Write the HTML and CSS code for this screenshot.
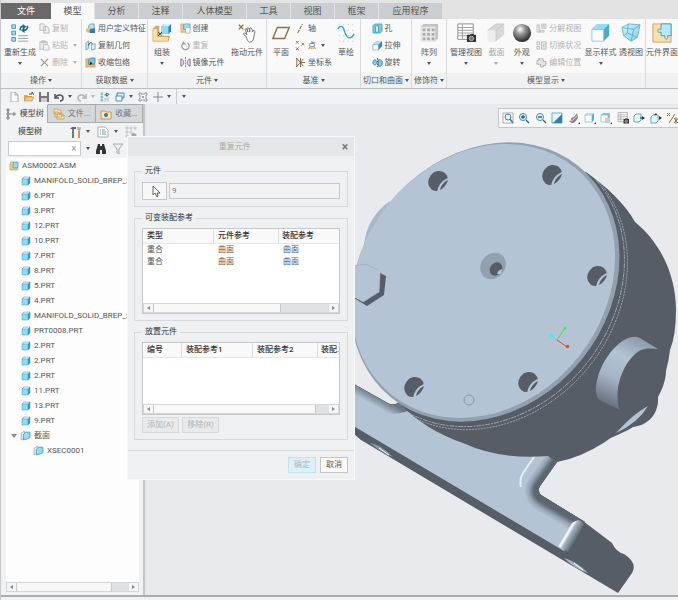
FILE: index.html
```html
<!DOCTYPE html>
<html lang="zh-CN">
<head>
  <meta charset="UTF-8">
  <title>ASM0002</title>
  <link rel="stylesheet" href="styles.css">
</head>
<body>
  <!-- iconos -->
  <svg class="sprite" aria-hidden="true">
    <defs>
      <linearGradient id="blue" x1="0" y1="0" x2="1" y2="1"><stop offset="0" stop-color="#d4f2fc"/><stop offset="1" stop-color="#7fcfee"/></linearGradient>
      <radialGradient id="ball" cx=".4" cy=".3" r=".65"><stop offset="0" stop-color="#fff"/><stop offset=".4" stop-color="#999"/><stop offset="1" stop-color="#333"/></radialGradient>
    </defs>
    <symbol id="cube" viewBox="0 0 10 10"><path d="M1 3l2-2h6v6L7 9H1z" fill="#2f9bc4"/><path d="M1 3l2-2h6L7 3z" fill="#d9f4fd"/><path d="M1 3h6v6H1z" fill="#8fdaf4"/><path d="M1 3l2-2h6v6L7 9H1zM1 3h6v6M7 3l2-2" fill="none" stroke="#4396b8" stroke-width=".5"/></symbol>
    <symbol id="asm" viewBox="0 0 10 10"><path d="M1 2l1-1h3v5h4v2L8 9H1z" fill="#f0cf8c" stroke="#b08a48" stroke-width=".6"/><path d="M4 2l1-1h4v5L8 7H4z" fill="#8fdaf4" stroke="#3688ab" stroke-width=".6"/></symbol>
    <symbol id="section" viewBox="0 0 10 10"><path d="M1 3l3-2v6L1 9z" fill="#f4f4f4" stroke="#999" stroke-width=".6"/><path d="M3 4l2-2h4v5L7 8 3 9z" fill="#92dcf4" stroke="#3f8fb0" stroke-width=".7"/></symbol>
    <symbol id="regen" viewBox="0 0 22 22"><g fill="#a6e0f5" stroke="#4294b5"><path d="M2 2h4v4H2zM2 9h4v4H2zM2 16h4v4H2z"/></g><path d="M9 14h11M9 17h11M9 20h11" stroke="#999"/><path d="M11 8c0-3 2-5 4-4M19 3c1 3-1 5-4 5" fill="none" stroke="#17678d" stroke-width="1.800"/><path d="M14 1l4 3-4 3zM16 5v6l-4-3z" fill="#17678d"/></symbol>
    <symbol id="copy" viewBox="0 0 12 12"><path d="M1 1h4l2 2v5H1zM5 4h4l2 2v5H5z" fill="#eee" stroke="#bbb"/></symbol>
    <symbol id="paste" viewBox="0 0 12 12"><path d="M1 2h8v8H1zM3 1h4v2H3z" fill="#eee" stroke="#bbb"/><path d="M5 5h4l2 2v4H5z" fill="#f5f5f5" stroke="#bbb"/></symbol>
    <symbol id="del" viewBox="0 0 12 12"><path d="M2 2l8 8M10 2l-8 8" stroke="#999" stroke-width="1.4"/></symbol>
    <symbol id="udf" viewBox="0 0 12 12"><path d="M4 3l2-2h4v6H4z" fill="#b9e4f4" stroke="#477f98" stroke-width=".7"/><circle cx="3.500" cy="8" r="2.500" fill="#e8bd70"/><path d="M5 11V8l2-2h4v5z" fill="#347da4"/></symbol>
    <symbol id="copygeo" viewBox="0 0 12 12"><path d="M1 11V3l3-2v8z" fill="#bfeafa" stroke="#4a8da8" stroke-width=".7"/><path d="M7 11V5l4-1v6z" fill="#d8f1fa" stroke="#4a8da8" stroke-width=".7"/><path d="M4 6c0-3 3-4 4-2" fill="none" stroke="#222"/></symbol>
    <symbol id="shrink" viewBox="0 0 12 12"><path d="M1 2h4v6h6v3H1z" fill="#e9bf74" stroke="#b28b4b" stroke-width=".6"/><path d="M4 3l2-2h5v6L9 8H4z" fill="#76c4e2" stroke="#2c7898" stroke-width=".7"/><path d="M5 9l1-4 2 2z" fill="#123"/></symbol>
    <symbol id="assemble" viewBox="0 0 22 22"><path d="M1 6l3-3h4v11h12l-2 6H1z" fill="#d5aa63"/><path d="M1 6h5v9h12v5H1z" fill="#fae2aa" stroke="#c49b58" stroke-width=".6"/><path d="M10 4l3-3h8v8l-3 3h-8z" fill="#2789ad"/><path d="M10 4l3-3h8l-3 3z" fill="#c9f1fd"/><path d="M10 4h8v8h-8z" fill="#8ddbf7"/><path d="M7 10l4 4M11 10l-4 4" stroke="#222"/></symbol>
    <symbol id="create" viewBox="0 0 12 12"><path d="M1 1h3v6h5v3H1z" fill="#f2d08c" stroke="#b08a48" stroke-width=".6"/><path d="M4 2l1-1h6v6H4z" fill="#9adcf3" stroke="#3f8fb0" stroke-width=".7"/><path d="M7 5h4v6H6V6z" fill="#fff" stroke="#888" stroke-width=".6"/></symbol>
    <symbol id="repeat" viewBox="0 0 12 12"><path d="M4 3a4 4 0 1 0 4 0" fill="none" stroke="#999" stroke-width="1.300"/><path d="M3 1v4h4z" fill="#999"/></symbol>
    <symbol id="mirror" viewBox="0 0 12 12"><path d="M1 2c4 1 4 7 0 8zM11 2c-4 1-4 7 0 8z" fill="#e9dcf4" stroke="#8261a5"/><path d="M6 0v12" stroke="#777" stroke-dasharray="2 1"/></symbol>
    <symbol id="drag" viewBox="0 0 22 22"><path d="M2 2l5 5M7 2L2 7" stroke="#94723a" stroke-width="1.500"/><path d="M10 15l-3-3c1-2 3 0 4 1L9 7c1-2 2 0 3 3l-1-4c1-2 3 0 3 4V6c1-2 3 0 3 4l1-2c2 0 2 2 1 5-1 5-1 8-5 8-2 0-3-3-4-6z" fill="#fff" stroke="#666"/></symbol>
    <symbol id="plane" viewBox="0 0 22 22"><path d="M7 5h13l-5 12H2z" fill="none" stroke="#94723a" stroke-width="1.600"/></symbol>
    <symbol id="axis" viewBox="0 0 12 12"><path d="M3 11L8 1" stroke="#94723a" stroke-width="1.200" stroke-dasharray="4 1"/></symbol>
    <symbol id="points" viewBox="0 0 12 12"><path d="M1 1l3 3M4 1L1 4M7 3l3 3M10 3L7 6M1 8l3 3M4 8l-3 3" stroke="#94723a"/></symbol>
    <symbol id="csys" viewBox="0 0 12 12"><path d="M1 1l5 5 3-4M1 11l5-5 3 4M2 1v10M6 1v10M6 6h5" fill="none" stroke="#79603a"/></symbol>
    <symbol id="sketch" viewBox="0 0 22 22"><path d="M3 2h18M3 8h18M3 14h18M3 20h18" stroke="#aaa" stroke-dasharray="1 4"/><path d="M2 7c2-5 6-4 7 1 2 7 4 9 7 8 2 0 3-2 4-4" fill="none" stroke="#2ea8d8" stroke-width="1.500"/></symbol>
    <symbol id="hole" viewBox="0 0 12 12"><path d="M1 3l2-2h8v8l-2 2H1z" fill="#7bc8e4" stroke="#3f8fb0" stroke-width=".7"/><path d="M4 3h3v7H4z" fill="#e9f9fe" stroke="#27789a" stroke-width=".7"/></symbol>
    <symbol id="extrude" viewBox="0 0 12 12"><path d="M1 5l4-4h6v6l-4 4H1z" fill="#358eb5"/><path d="M1 5h6v6H1z" fill="#fff" stroke="#77a6b8" stroke-width=".7"/><path d="M1 5l4-4h6L7 5z" fill="#ade4f7"/></symbol>
    <symbol id="revolve" viewBox="0 0 12 12"><path d="M1 6c0-4 4-4 4 0s-4 3-4 0zM7 3h2c3 1 3 6 0 7H7z" fill="#85cce6" stroke="#348dac"/><path d="M6 1v10" stroke="#555" stroke-dasharray="2 1"/></symbol>
    <symbol id="pattern" viewBox="0 0 22 22"><path d="M2 4l3-3h16v16l-3 3H2z" fill="#c4c4c4"/><path d="M2 4h16v16H2z" fill="#e7e7e7"/><g fill="#aaa"><path d="M4 6h3v3H4zM9 6h3v3H9zM14 6h3v3h-3zM4 11h3v3H4zM9 11h3v3H9zM14 11h3v3h-3zM4 16h3v3H4zM9 16h3v3H9zM14 16h3v3h-3z"/></g></symbol>
    <symbol id="camera" viewBox="0 0 22 22"><path d="M2 1h17v17H2z" fill="#fff" stroke="#888"/><path d="M2 5h17M2 8h17M2 11h17M2 14h17M7 1v17" stroke="#999"/><path d="M12 13h3l1-1h3l1 1h2v8H12z" fill="#333"/><circle cx="17" cy="17" r="2.500" fill="#777" stroke="#ddd" stroke-width=".7"/></symbol>
    <symbol id="cut" viewBox="0 0 22 22"><path d="M2 8l9-7h9v12l-9 7H2z" fill="#d8d8d8"/><path d="M2 8h9v12H2z" fill="#eee"/><path d="M2 8l9-7h9l-9 7v12" fill="none" stroke="#bbb" stroke-width=".7"/></symbol>
    <symbol id="sphere" viewBox="0 0 22 22"><circle cx="11" cy="11" r="10" fill="url(#ball)"/></symbol>
    <symbol id="explode" viewBox="0 0 12 12"><path d="M1 2h3v8H1zM6 1h2v5H6zM9 1h2v5H9zM4 8h5v2H4z" fill="#ddd" stroke="#bbb" stroke-width=".7"/></symbol>
    <symbol id="toggle" viewBox="0 0 12 12"><path d="M1 2h3v3H1zM1 7h3v3H1zM6 2h5v8H6z" fill="#eee" stroke="#bbb"/><path d="M8 4v4M10 4v4" stroke="#bbb"/></symbol>
    <symbol id="editpos" viewBox="0 0 12 12"><path d="M3 2h5v3h3v4H8v2H5V8H1V4h2z" fill="#e4e4e4" stroke="#999" stroke-dasharray="2 1"/></symbol>
    <symbol id="style" viewBox="0 0 22 22"><path d="M1 7l6-6h13v13l-6 6z" fill="#4fa9c6"/><path d="M1 7l6-6h13l-6 6z" fill="#91dff8"/><path d="M1 7h13v13H1z" fill="#fff" stroke="#83c6df"/></symbol>
    <symbol id="persp" viewBox="0 0 22 22"><path d="M1 5l7-4 13 1-3 14-7 4-8-6z" fill="url(#blue)" stroke="#6db3cd"/><path d="M1 5l13 2 7-5M14 7l-3 13M8 1L7 11l11 5M7 11l-4 3" fill="none" stroke="#5ba4bf" stroke-width=".8"/></symbol>
    <symbol id="puzzle" viewBox="0 0 22 22"><path d="M1 1h20v20H1z" fill="#f9dfac" stroke="#c9a160"/><path d="M11 1h10v13h-4c2 5-4 5-3 0h-4v-4C5 12 5 5 10 7V1z" fill="#b8e9f8" stroke="#4b9ab6"/></symbol>
    <symbol id="new" viewBox="0 0 10 10"><path d="M2 0h4l3 3v7H2z" fill="#fff" stroke="#999" stroke-width=".8"/><path d="M6 0v3h3" fill="none" stroke="#999" stroke-width=".8"/></symbol>
    <symbol id="open" viewBox="0 0 10 10"><path d="M0 3h3l1 1h4v5H0z" fill="#dca954"/><path d="M2 5h8L8 9H0z" fill="#f2cc82" stroke="#a47a37" stroke-width=".5"/><path d="M5 2h3V0l2 3" fill="none" stroke="#555"/></symbol>
    <symbol id="save" viewBox="0 0 10 10"><path d="M0 0h10v10H0z" fill="#777"/><path d="M2 0h6v4H2z" fill="#eee"/><path d="M2 6h6v4H2z" fill="#ccc"/></symbol>
    <symbol id="undo" viewBox="0 0 10 10"><path d="M1 2v4h4" fill="none" stroke="currentColor" stroke-width="1.500"/><path d="M1 6c3-5 8-3 8 0 0 2-1 3-3 3" fill="none" stroke="currentColor" stroke-width="1.500"/></symbol>
    <symbol id="windows" viewBox="0 0 10 10"><path d="M2 1h7v5H2z" fill="#d9f2fb" stroke="#3f8fb0"/><path d="M1 4h6v5H1z" fill="#fff" stroke="#3f8fb0"/></symbol>
    <symbol id="closewin" viewBox="0 0 10 10"><path d="M1 1h2v1h4V1h2v2H8v4h1v2H7V8H3v1H1V7h1V3H1zM4 4l2 2M6 4L4 6" fill="none" stroke="#888" stroke-width=".8"/></symbol>
    <symbol id="plus" viewBox="0 0 10 10"><path d="M5 0v10M0 5h10" stroke="#888"/></symbol>
    <symbol id="treeicon" viewBox="0 0 12 12"><path d="M2 1h2v2H2zM2 5h2v2H2zM2 9h2v2H2zM8 5h2v2H8zM3 3v2M3 7v2M5 6h2" fill="none" stroke="#666" stroke-width=".8"/></symbol>
    <symbol id="folders" viewBox="0 0 12 12"><g fill="#f8e5bd" stroke="#c49a52" stroke-width=".8"><path d="M1 1h3l1 1h3v4H1zM2 4h3l1 1h3v4H2zM4 6h3l1 1h3v4H4z"/></g></symbol>
    <symbol id="fav" viewBox="0 0 12 12"><path d="M1 3h4l1 1h5v7H1z" fill="#f8e5bd" stroke="#c49a52"/><circle cx="6" cy="7" r="2" fill="#2b7da0"/></symbol>
    <symbol id="tools" viewBox="0 0 12 12"><path d="M4 3v9" stroke="#777" stroke-width="2"/><path d="M1 3l2-2h4v2z" fill="#666"/><path d="M10 5v7" stroke="#d09a4c" stroke-width="2"/><path d="M9 1v3h2V1" fill="none" stroke="#888"/></symbol>
    <symbol id="listdoc" viewBox="0 0 12 12"><path d="M1 1h7l3 3v7H1z" fill="#fff" stroke="#999" stroke-width=".8"/><path d="M3 4h1M5 4h3M3 6h1M5 6h4M3 8h1M5 8h4" stroke="#4685a0" stroke-width=".8"/></symbol>
    <symbol id="gridoff" viewBox="0 0 12 12"><path d="M1 1h2v2H1zM1 5h2v2H1zM1 9h2v2H1zM5 1h2v2H5zM9 1h2v2H9zM5 5h2v2H5z" fill="none" stroke="#bbb" stroke-width=".8"/><path d="M6 9c2-3 4-2 6 0-2 2-4 2-6 0z" fill="#aaa"/></symbol>
    <symbol id="binoc" viewBox="0 0 12 12"><path d="M3 1h2v2h2V1h2l2 7v3H7V7H5v4H1V8z" fill="#333"/></symbol>
    <symbol id="funnel" viewBox="0 0 12 12"><path d="M1 1h10L7 6v5L5 10V6z" fill="#eee" stroke="#aaa"/></symbol>
    <symbol id="refit" viewBox="0 0 12 12"><path d="M1 1h10v10H1z" fill="#fff" stroke="#aaa"/><circle cx="6" cy="5" r="3" fill="#dff3fa" stroke="#477f98"/><path d="M8 7l3 4" stroke="#477f98" stroke-width="1.500"/></symbol>
    <symbol id="zoomin" viewBox="0 0 12 12"><circle cx="5" cy="5" r="3.500" fill="#e5f6fc" stroke="#4b87a1"/><path d="M3 5h4M5 3v4M8 8l3 3" stroke="#176b93" stroke-width="1.300"/></symbol>
    <symbol id="zoomout" viewBox="0 0 12 12"><circle cx="5" cy="5" r="3.500" fill="#e5f6fc" stroke="#4b87a1"/><path d="M3 5h4M8 8l3 3" stroke="#176b93" stroke-width="1.300"/></symbol>
    <symbol id="repaint" viewBox="0 0 12 12"><path d="M1 1h10v10H1z" fill="#eaf8fd" stroke="#6babc4"/><path d="M2 11l9-9v9z" fill="#32819f"/></symbol>
    <symbol id="render" viewBox="0 0 12 12"><path d="M1 9c4 0 0-4 5-4l3-4 1 5-3 4c-2 2-4 1-6-1z" fill="#888"/><path d="M3 9c3-1 3-3 6-5" stroke="#ddd" fill="none"/><path d="M12 10v2h-2z" fill="#444"/></symbol>
    <symbol id="stylebox" viewBox="0 0 12 12"><path d="M1 3l2-2h7v7l-2 2H1z" fill="#51aed0"/><path d="M1 3h7v7H1z" fill="#fff" stroke="#74bbd4" stroke-width=".7"/><path d="M1 3l2-2h7L8 3z" fill="#aae2f5"/><path d="M12 10v2h-2z" fill="#444"/></symbol>
    <symbol id="saved" viewBox="0 0 12 12"><path d="M1 3l2-2h7v7l-2 2H1z" fill="#7cc5df"/><path d="M1 3h7v7H1z" fill="#fff" stroke="#74bbd4" stroke-width=".7"/><path d="M5 6h5v5H5z" fill="#ccc"/><path d="M12 10v2h-2z" fill="#444"/></symbol>
    <symbol id="boxright" viewBox="0 0 12 12"><path d="M1 4l2-2h5v6l-2 2H1z" fill="#e8f8fd" stroke="#55a9c7"/><path d="M7 6h3" stroke="#333"/><path d="M9 4l3 2-3 2z" fill="#333"/></symbol>
    <symbol id="boxup" viewBox="0 0 12 12"><path d="M1 5l2-2h5v6l-2 2H1z" fill="#e8f8fd" stroke="#55a9c7"/><path d="M4 3l2-2 1 2zM9 4l3 2-3 2z" fill="#333"/></symbol>
    <symbol id="datums" viewBox="0 0 12 12"><path d="M1 1l3 3M4 1L1 4M3 11l6-9M8 6l4 5M12 6l-4 5M10 5v7" stroke="#94723a"/></symbol>
    <symbol id="pointer" viewBox="0 0 12 12"><path d="M4 1v9l2-2 2 4 1-1-1-3h3z" fill="#fff" stroke="#555" stroke-width=".9"/></symbol>
  </svg>

  <nav class="tabs">
    <button class="tab file">文件</button>
    <button class="tab active">模型</button>
    <button class="tab">分析</button>
    <button class="tab">注释</button>
    <button class="tab wide">人体模型</button>
    <button class="tab">工具</button>
    <button class="tab">视图</button>
    <button class="tab">框架</button>
    <button class="tab wide">应用程序</button>
  </nav>

  <div class="ribbon">
    <section class="group g-ops">
      <div class="tools">
        <button class="big w32"><svg><use href="#regen"/></svg>重新生成<i class="arrow"></i></button>
        <div class="stack">
          <button class="small" disabled><svg><use href="#copy"/></svg>复制</button>
          <button class="small" disabled><svg><use href="#paste"/></svg>粘贴<i class="arrow"></i></button>
          <button class="small" disabled><svg><use href="#del"/></svg>删除<i class="arrow"></i></button>
        </div>
      </div>
      <button class="caption">操作<i class="arrow"></i></button>
    </section>
    <section class="group g-data">
      <div class="tools">
        <div class="stack">
          <button class="small"><svg><use href="#udf"/></svg>用户定义特征</button>
          <button class="small"><svg><use href="#copygeo"/></svg>复制几何</button>
          <button class="small"><svg><use href="#shrink"/></svg>收缩包络</button>
        </div>
      </div>
      <button class="caption">获取数据<i class="arrow"></i></button>
    </section>
    <section class="group g-comp">
      <div class="tools">
        <button class="big w22"><svg><use href="#assemble"/></svg>组装<i class="arrow"></i></button>
        <div class="stack">
          <button class="small"><svg><use href="#create"/></svg>创建</button>
          <button class="small" disabled><svg><use href="#repeat"/></svg>重复</button>
          <button class="small"><svg><use href="#mirror"/></svg>镜像元件</button>
        </div>
        <button class="big w32"><svg><use href="#drag"/></svg>拖动元件</button>
      </div>
      <button class="caption">元件<i class="arrow"></i></button>
    </section>
    <section class="group g-datum">
      <div class="tools">
        <button class="big w22"><svg><use href="#plane"/></svg>平面</button>
        <div class="stack">
          <button class="small"><svg><use href="#axis"/></svg>轴</button>
          <button class="small"><svg><use href="#points"/></svg>点<i class="arrow"></i></button>
          <button class="small"><svg><use href="#csys"/></svg>坐标系</button>
        </div>
        <button class="big w22"><svg><use href="#sketch"/></svg>草绘</button>
      </div>
      <button class="caption">基准<i class="arrow"></i></button>
    </section>
    <section class="group g-cut">
      <div class="tools">
        <div class="stack">
          <button class="small"><svg><use href="#hole"/></svg>孔</button>
          <button class="small"><svg><use href="#extrude"/></svg>拉伸</button>
          <button class="small"><svg><use href="#revolve"/></svg>旋转</button>
        </div>
      </div>
      <button class="caption">切口和曲面<i class="arrow"></i></button>
    </section>
    <section class="group g-mod">
      <div class="tools">
        <button class="big w22"><svg><use href="#pattern"/></svg>阵列<i class="arrow"></i></button>
      </div>
      <button class="caption">修饰符<i class="arrow"></i></button>
    </section>
    <section class="group g-show">
      <div class="tools">
        <button class="big w32"><svg><use href="#camera"/></svg>管理视图<i class="arrow"></i></button>
        <button class="big w22" disabled><svg><use href="#cut"/></svg>截面<i class="arrow"></i></button>
        <button class="big w22"><svg><use href="#sphere"/></svg>外观<i class="arrow"></i></button>
        <div class="stack">
          <button class="small" disabled><svg><use href="#explode"/></svg>分解视图</button>
          <button class="small" disabled><svg><use href="#toggle"/></svg>切换状况</button>
          <button class="small" disabled><svg><use href="#editpos"/></svg>编辑位置</button>
        </div>
        <button class="big w32"><svg><use href="#style"/></svg>显示样式<i class="arrow"></i></button>
        <button class="big w22"><svg><use href="#persp"/></svg>透视图</button>
      </div>
      <button class="caption">模型显示<i class="arrow"></i></button>
    </section>
    <section class="group g-ui">
      <div class="tools">
        <button class="big w32"><svg><use href="#puzzle"/></svg>元件界面</button>
      </div>
      <div class="caption"></div>
    </section>
  </div>

  <div class="quickbar">
    <button aria-label="新建"><svg><use href="#new"/></svg></button>
    <button aria-label="打开"><svg><use href="#open"/></svg></button>
    <button aria-label="保存"><svg><use href="#save"/></svg></button>
    <button aria-label="撤消"><svg><use href="#undo"/></svg><i class="arrow"></i></button>
    <button aria-label="重做" class="redo" disabled><svg><use href="#undo"/></svg><i class="arrow"></i></button>
    <button aria-label="重新生成"><svg><use href="#regen"/></svg></button>
    <button aria-label="窗口"><svg><use href="#windows"/></svg><i class="arrow"></i></button>
    <button aria-label="关闭"><svg><use href="#closewin"/></svg></button>
    <button aria-label="添加"><svg><use href="#plus"/></svg><i class="arrow"></i></button>
    <button aria-label="自定义" class="more"><i class="arrow"></i></button>
  </div>

  <main class="work">
    <aside class="side">
      <div class="side-tabs">
        <button class="side-tab active"><svg><use href="#treeicon"/></svg>模型树</button>
        <button class="side-tab"><svg><use href="#folders"/></svg>文件...</button>
        <button class="side-tab"><svg><use href="#fav"/></svg>收藏...</button>
      </div>
      <div class="side-head">
        <strong>模型树</strong>
        <button aria-label="设置"><svg><use href="#tools"/></svg><i class="arrow"></i></button>
        <button aria-label="显示"><svg><use href="#listdoc"/></svg><i class="arrow"></i></button>
        <button aria-label="列" disabled><svg><use href="#gridoff"/></svg></button>
      </div>
      <div class="search">
        <div class="search-box">
          <input type="text" aria-label="搜索">
          <button aria-label="清除">×</button>
        </div>
        <button aria-label="选项"><i class="arrow"></i></button>
        <button aria-label="查找"><svg><use href="#binoc"/></svg></button>
        <button aria-label="过滤"><svg><use href="#funnel"/></svg></button>
      </div>
      <div class="tree-box">
        <ul class="tree">
          <li class="root"><svg><use href="#asm"/></svg>ASM0002.ASM</li>
          <li><svg><use href="#cube"/></svg>MANIFOLD_SOLID_BREP_2</li>
          <li><svg><use href="#cube"/></svg>6.PRT</li>
          <li><svg><use href="#cube"/></svg>3.PRT</li>
          <li><svg><use href="#cube"/></svg>12.PRT</li>
          <li><svg><use href="#cube"/></svg>10.PRT</li>
          <li><svg><use href="#cube"/></svg>7.PRT</li>
          <li><svg><use href="#cube"/></svg>8.PRT</li>
          <li><svg><use href="#cube"/></svg>5.PRT</li>
          <li><svg><use href="#cube"/></svg>4.PRT</li>
          <li><svg><use href="#cube"/></svg>MANIFOLD_SOLID_BREP_2</li>
          <li><svg><use href="#cube"/></svg>PRT0008.PRT</li>
          <li><svg><use href="#cube"/></svg>2.PRT</li>
          <li><svg><use href="#cube"/></svg>2.PRT</li>
          <li><svg><use href="#cube"/></svg>2.PRT</li>
          <li><svg><use href="#cube"/></svg>11.PRT</li>
          <li><svg><use href="#cube"/></svg>13.PRT</li>
          <li><svg><use href="#cube"/></svg>9.PRT</li>
          <li class="open"><i class="arrow"></i><svg><use href="#section"/></svg>截面</li>
          <li class="child"><svg><use href="#section"/></svg>XSEC0001</li>
        </ul>
        <div class="scrollbar"><i class="prev"></i><span class="thumb t75"></span><i class="next"></i></div>
      </div>
    </aside>

    <div class="view">
      <svg class="model" viewBox="145 104 533 491" preserveAspectRatio="xMinYMin slice">
        <defs>
          <linearGradient id="boss" gradientUnits="userSpaceOnUse" x1="635" y1="335" x2="603" y2="408"><stop offset="0" stop-color="#8a98a8"/><stop offset=".3" stop-color="#b4c4d5"/><stop offset=".6" stop-color="#a5b4c5"/><stop offset="1" stop-color="#5c6570"/></linearGradient>
          <linearGradient id="end" gradientUnits="userSpaceOnUse" x1="564" y1="534" x2="576" y2="541"><stop offset="0" stop-color="#b4c4d5"/><stop offset=".2" stop-color="#fff"/><stop offset=".4" stop-color="#a3b3c3"/><stop offset="1" stop-color="#565d67"/></linearGradient>
          <linearGradient id="leftedge" gradientUnits="userSpaceOnUse" x1="374" y1="394" x2="369" y2="403"><stop offset="0" stop-color="#6a7582"/><stop offset="1" stop-color="#b4c4d5"/></linearGradient>
          <clipPath id="bodyclip"><path d="M560 180L586 172C608 188 625 204 635 222C662 244 676 277 676 310L657 410L553 465L483 453C445 440 420 425 400 405L440 360Z"/></clipPath>
          <clipPath id="plateclip"><path d="M460 440L558 450L557 462L540 486Q537 491 541 495L585 522L564 551L500 520Z"/></clipPath>
          <path id="rim" d="M561 456L541 484Q534 493 544 499L590 526"/>
          <g id="bolt">
            <ellipse rx="10.500" ry="9.300" transform="rotate(-51)" fill="#565d67"/>
            <path d="M-1 11C0 4 5-2 11-3V12Z" fill="#b4c4d5"/>
            <path d="M2 9C3 4 6 1 10-1C9 3 6 7 2 9Z" fill="#565d67"/>
          </g>
        </defs>
        <!-- 底座 -->
        <path d="M340 376L388 403Q394 406 399 402L553 465L557 462L540 486Q537 491 541 495L583 521L612 543Q616 552 624 554Q638 563 632 573L618 593L361 440Q350 431 340 421Z" fill="#565d67"/>
        <path d="M340 377L388 404Q394 407 400 403L460 440L553 450L557 462L540 486Q537 491 541 495L582 522L564 551L340 418Z" fill="#b4c4d5"/>
        <path d="M340 377L388 404Q394 407 400 403L408 411Q392 417 380 411L340 388Z" fill="url(#leftedge)"/>
        <g clip-path="url(#plateclip)" fill="none" stroke-linejoin="round">
          <use href="#rim" stroke="#a9b8c8" stroke-width="26"/>
          <use href="#rim" stroke="#9cabbb" stroke-width="22"/>
          <use href="#rim" stroke="#8c9aaa" stroke-width="18"/>
          <use href="#rim" stroke="#7a8795" stroke-width="15"/>
          <use href="#rim" stroke="#6a7582" stroke-width="12"/>
          <use href="#rim" stroke="#5d6570" stroke-width="9"/>
          <path d="M536 454L523 473Q519 480 521 487" stroke="#e4edf5" stroke-width="2"/>
        </g>
        <path d="M572 523Q580 517 583 524Q583 530 568 552L558 546Z" fill="url(#end)"/>
        <path d="M370 443Q380 444 393 457Q383 454 370 443Z" fill="#8997a7"/>
        <path d="M379 448L389 455" stroke="#fff"/>
        <path d="M564 558Q576 561 588 573Q575 569 564 558Z" fill="#a5b3c2"/>
        <path d="M574 563L583 570" stroke="#fff"/>
        <!-- 壳体 -->
        <path d="M550 190L586 172C608 188 625 204 635 222C662 244 676 277 676 310Q676 335 670 350Q669 360 666 371C666 380 662 390 658 397C659 412 650 425 633 427C622 434 612 436 605 442Q580 458 557 462L548 456Q500 460 463 443Q425 430 399 403Z" fill="#565d67"/>
        <path d="M364 245Q367 217 390 201L388 218Z" fill="#a8b8c9"/>
        <g clip-path="url(#bodyclip)" fill="none" stroke="#a8b2bf" stroke-width=".8">
          <ellipse cx="488" cy="285" rx="151" ry="126" transform="rotate(-51 488 285)" stroke-dasharray="5 1 2 1"/>
          <ellipse cx="490" cy="287" rx="152" ry="127" transform="rotate(-51 490 287)" stroke-dasharray="2 1"/>
        </g>
        <ellipse cx="485" cy="282" rx="149" ry="124" transform="rotate(-51 485 282)" fill="#92a0b0"/>
        <ellipse cx="483" cy="281" rx="146" ry="122" transform="rotate(-51 483 281)" fill="#b4c4d5"/>
        <path d="M632 337C615 340 596 368 596 390C596 397 598 399 601 401L620 410C614 395 619 370 634 355C643 346 652 349 658 349L640 338Q636 336 632 337Z" fill="url(#boss)"/>
        <path d="M616 433Q633 414 648 406Q638 423 616 433Z" fill="#b4c4d5"/>
        <!-- 孔 -->
        <use href="#bolt" x="438" y="181"/>
        <use href="#bolt" x="552" y="175"/>
        <use href="#bolt" x="597" y="276"/>
        <use href="#bolt" x="528" y="382"/>
        <use href="#bolt" x="414" y="387"/>
        <ellipse cx="493" cy="266" rx="14" ry="12" transform="rotate(-51 493 266)" fill="#92a0b0"/>
        <ellipse cx="496" cy="269" rx="7" ry="6" transform="rotate(-51 496 269)" fill="#565d67"/>
        <path d="M497 274Q498 270 502 269L501 274Z" fill="#b4c4d5"/>
        <path d="M380 273L386 276L384 295L367 306L354 298L379 291Z" fill="#565d67"/>
        <path d="M350 267L366 264L378 270L380 274L379 292L363 302L350 295Z" fill="#b4c4d5"/>
        <path d="M354 266L366 264L378 270M380 274L379 292L363 302" fill="none" stroke="#9fafbf" stroke-width=".8"/>
        <ellipse cx="469" cy="400" rx="5" ry="5" fill="none" stroke="#7e8b9a" stroke-width=".8"/>
        <path d="M557 340L565 328" stroke="#4ae04a"/>
        <path d="M557 340L551 335" stroke="#3fe6f0"/>
        <path d="M557 340L567 347" stroke="#f04444"/>
        <circle cx="565" cy="328" r="1.500" fill="#3bea3b"/>
        <circle cx="551" cy="335" r="2" fill="#35effb"/>
        <circle cx="567.500" cy="346.500" r="1.700" fill="#fb3a3a"/>
      </svg>
      <div class="viewbar">
        <button aria-label="重新调整"><svg><use href="#refit"/></svg></button>
        <button aria-label="放大"><svg><use href="#zoomin"/></svg></button>
        <button aria-label="缩小"><svg><use href="#zoomout"/></svg></button>
        <button aria-label="重画"><svg><use href="#repaint"/></svg></button>
        <button aria-label="渲染"><svg><use href="#render"/></svg></button>
        <button aria-label="显示样式"><svg><use href="#stylebox"/></svg></button>
        <button aria-label="已保存方向"><svg><use href="#saved"/></svg></button>
        <button aria-label="视图管理器"><svg><use href="#camera"/></svg></button>
        <button aria-label="右侧"><svg><use href="#boxright"/></svg></button>
        <button aria-label="旋转中心"><svg><use href="#boxup"/></svg></button>
        <button aria-label="基准显示"><svg><use href="#datums"/></svg></button>
      </div>
    </div>

    <div class="dialog" role="dialog" aria-labelledby="dlgTitle">
      <header>
        <span id="dlgTitle">重复元件</span>
        <button aria-label="关闭">×</button>
      </header>
      <div class="dialog-body">
        <fieldset>
          <legend>元件</legend>
          <div class="pick">
            <button aria-label="选择"><svg><use href="#pointer"/></svg></button>
            <input type="text" value="9" aria-label="元件">
          </div>
        </fieldset>
        <fieldset>
          <legend>可变装配参考</legend>
          <div class="list refs">
            <table>
              <colgroup><col class="c71"><col class="c65"><col></colgroup>
              <thead><tr><th>类型</th><th>元件参考</th><th>装配参考</th></tr></thead>
              <tbody>
                <tr><td>重合</td><td>曲面</td><td>曲面</td></tr>
                <tr><td>重合</td><td>曲面</td><td>曲面</td></tr>
              </tbody>
            </table>
            <div class="scrollbar"><i class="prev"></i><span class="thumb t72"></span><i class="next"></i></div>
          </div>
        </fieldset>
        <fieldset>
          <legend>放置元件</legend>
          <div class="list places">
            <table>
              <colgroup><col class="c39"><col class="c71"><col class="c65"><col></colgroup>
              <thead><tr><th>编号</th><th>装配参考1</th><th>装配参考2</th><th>装配.</th></tr></thead>
            </table>
            <div class="scrollbar"><i class="prev"></i><span class="thumb t92"></span><i class="next"></i></div>
          </div>
          <div class="row-buttons">
            <button class="btn" disabled>添加(A)</button>
            <button class="btn" disabled>移除(R)</button>
          </div>
        </fieldset>
      </div>
      <footer>
        <button class="btn ok" disabled>确定</button>
        <button class="btn">取消</button>
      </footer>
    </div>
  </main>
</body>
</html>
```
FILE: styles.css
```css
* {
  box-sizing: border-box;
}

body {
  display: flex;
  flex-direction: column;
  min-height: 100vh;
  margin: 0;
  padding-bottom: 3px;
  border-left: 1px solid #c6c8ca;
  overflow: hidden;
  background-color: #f0f2f3;
  color: #555;
  font: 8px/10px Roboto, "Noto Sans CJK SC", sans-serif;
}

button,
input {
  margin: 0;
  padding: 0;
  border: 0;
  background: none;
  color: inherit;
  font: inherit;
}

button {
  white-space: nowrap;
}

button:disabled {
  color: #b4b4b4;
}

svg {
  display: block;
  flex: none;
}

.sprite {
  position: absolute;
  width: 0;
  height: 0;
}

.arrow {
  flex: none;
  width: 0;
  height: 0;
  border: 2px solid transparent;
  border-top: 3px solid currentColor;
  border-bottom: 0;
}

/* tabs */
.tabs {
  display: flex;
  height: 19px;
  padding-top: 3px;
  background-color: #e3e3e3;
}

.tab {
  width: 44px;
  border-right: 1px solid #e3e3e3;
  background-color: #cbced0;
  font-size: 9px;
  line-height: 14px;
}

.tab.wide {
  width: 64px;
}

.tab.file {
  width: 50px;
  border: 0;
  background-color: #696969;
  color: #fff;
}

.tab.active {
  background-color: #f9f9f9;
}

/* ribbon */
.ribbon {
  display: flex;
  height: 70px;
  overflow: hidden;
  border-bottom: 1px solid #bbbdbf;
  background-color: #f9f9f9;
}

.group {
  display: flex;
  flex: none;
  flex-direction: column;
  border-right: 1px solid #d8dadb;
}

.g-ops { width: 81px; }
.g-data { width: 66px; }
.g-comp { width: 119px; }
.g-datum { width: 94px; }
.g-cut { width: 51px; }
.g-mod { width: 35px; }
.g-show { width: 199px; }

.g-ui {
  flex: 1;
  border: 0;
}

.tools {
  display: flex;
  flex: 1;
  justify-content: space-between;
  padding: 1px 3px 0;
}

.g-ops .tools {
  padding-right: 4px;
}

.g-cut .tools,
.g-mod .tools {
  justify-content: center;
}

.g-ui .tools {
  justify-content: flex-start;
  padding: 1px 0 0;
}

.big {
  display: flex;
  flex: none;
  flex-direction: column;
  align-items: center;
  padding-top: 3px;
}

.w22 { width: 22px; }
.w32 { width: 32px; }

.big svg {
  width: 20px;
  height: 20px;
  margin-bottom: 5px;
}

.big .arrow {
  margin-top: 4px;
}

.big:disabled {
  color: #aaa;
}

.small {
  display: flex;
  align-items: center;
  gap: 2px;
  height: 17px;
}

.small svg {
  width: 11px;
  height: 11px;
}

.small .arrow {
  margin-left: 3px;
}

.caption {
  display: flex;
  align-items: center;
  justify-content: center;
  gap: 2px;
  width: 100%;
  height: 15px;
  background-color: #eff1f2;
}

/* quick access */
.quickbar {
  display: flex;
  align-items: center;
  gap: 5px;
  height: 15px;
  padding-left: 8px;
}

.quickbar button {
  display: flex;
  align-items: center;
  gap: 4px;
}

.quickbar svg {
  width: 10px;
  height: 10px;
}

.redo svg {
  transform: scaleX(-1);
}

.quickbar .more {
  height: 15px;
  padding-left: 5px;
  border-left: 1px solid #ccc;
}

/* work area */
.work {
  position: relative;
  display: flex;
  flex: 1;
  border-bottom: 2px solid #aaadb0;
}

.side {
  display: flex;
  flex: none;
  flex-direction: column;
  width: 144px;
  border-right: 2px solid #c3c6c8;
}

.side-tabs {
  display: flex;
  height: 19px;
}

.side-tab {
  display: flex;
  flex: 1;
  align-items: center;
  justify-content: center;
  gap: 3px;
  border: 1px solid #a9acae;
  border-left: 0;
  background-color: #d5d8da;
  color: #777;
}

.side-tab.active {
  border-top-color: #f0f2f3;
  border-bottom: 0;
  background: none;
  color: #444;
}

.side-tab svg {
  width: 12px;
  height: 12px;
}

.side-head {
  display: flex;
  align-items: center;
  gap: 7px;
  height: 17px;
  padding: 0 6px 0 17px;
}

.side-head strong {
  flex: 1;
  font-weight: 500;
}

.side-head button {
  display: flex;
  align-items: center;
  gap: 5px;
}

.side-head svg,
.search svg {
  width: 12px;
  height: 12px;
}

.search {
  display: flex;
  align-items: center;
  gap: 5px;
  height: 17px;
  margin-bottom: 1px;
  padding-left: 7px;
}

.search > button {
  display: flex;
}

.search-box {
  display: flex;
  width: 73px;
  height: 15px;
  border: 1px solid #c9cccd;
  background-color: #fff;
}

.search-box input {
  flex: 1;
  min-width: 0;
}

.search-box button {
  width: 12px;
  color: #999;
  font-size: 10px;
}

.tree-box {
  display: flex;
  flex: 1;
  flex-direction: column;
  justify-content: space-between;
  margin: 0 4px 3px 5px;
  overflow: hidden;
  background-color: #fdfdfd;
}

.tree {
  margin: 0;
  padding: 0;
  list-style: none;
}

.tree li {
  display: flex;
  align-items: center;
  gap: 3px;
  height: 15px;
  padding-left: 15px;
  white-space: nowrap;
}

.tree .root {
  padding-left: 3px;
}

.tree .open {
  padding-left: 5px;
}

.tree .child {
  padding-left: 27px;
}

.tree .arrow {
  border-width: 4px 3px 0;
  color: #888;
}

.tree svg {
  width: 10px;
  height: 10px;
}

.tree .open svg,
.tree .child svg {
  width: 11px;
  height: 11px;
}

/* scrollbars */
.scrollbar {
  display: flex;
  align-items: center;
  height: 10px;
  border: 1px solid #d4d6d8;
  background-color: #dfe1e2;
}

.scrollbar i {
  width: 9px;
  height: 8px;
  background-color: #f5f5f5;
}

.scrollbar i::before {
  display: block;
  width: 0;
  height: 0;
  margin: 2px 3px;
  border: 2px solid transparent;
  content: "";
}

.scrollbar .prev::before {
  border-left: 0;
  border-right: 3px solid #888;
}

.scrollbar .next::before {
  border-right: 0;
  border-left: 3px solid #888;
}

.scrollbar .next {
  margin-left: auto;
}

.thumb {
  height: 8px;
  border: solid #c6c8ca;
  border-width: 0 1px;
  background-color: #f8f8f8;
}

.t72 { width: 66%; }
.t75 { width: 73%; }
.t92 { width: 84%; }

/* graphics */
.view {
  position: relative;
  flex: 1;
  overflow: hidden;
  background-color: #e8eaed;
}

.model {
  position: absolute;
  width: 100%;
  height: 100%;
}

.viewbar {
  position: absolute;
  top: 4px;
  right: 0;
  display: flex;
  align-items: center;
  justify-content: space-between;
  width: 180px;
  height: 20px;
  padding-left: 3px;
  border: 1px solid #c4c6c8;
  border-right: 0;
  background-color: #f7f7f7;
}

.viewbar svg {
  width: 12px;
  height: 12px;
}

/* dialog */
.dialog {
  position: absolute;
  top: 32px;
  left: 126px;
  width: 228px;
  border: 1px solid #f7f8f8;
  background-color: #eef0f1;
}

.dialog header {
  display: flex;
  align-items: center;
  height: 19px;
  padding-right: 6px;
  background-color: #e4e6e7;
  color: #aaa;
}

.dialog header span {
  flex: 1;
  text-align: center;
}

.dialog header button {
  color: #777;
  font-size: 12px;
  font-weight: bold;
}

.dialog-body {
  display: flex;
  flex-direction: column;
  gap: 6px;
  padding: 10px 6px;
}

fieldset {
  min-width: 0;
  margin: 0;
  padding: 5px 7px 6px;
  border: 1px solid #d6d8da;
}

legend {
  padding: 0 3px;
  color: #333;
}

.pick {
  display: flex;
  align-items: center;
  gap: 2px;
  height: 19px;
}

.pick button {
  display: flex;
  align-items: center;
  justify-content: center;
  width: 25px;
  height: 18px;
  border: 1px solid #c6c8ca;
  background-color: #f7f7f7;
}

.pick svg {
  width: 12px;
  height: 12px;
}

.pick input {
  flex: 1;
  min-width: 0;
  height: 16px;
  padding-left: 2px;
  border: 1px solid #c6c8ca;
  background-color: #f2f2f2;
  color: #777;
}

.list {
  display: flex;
  flex-direction: column;
  justify-content: space-between;
  overflow: hidden;
  border: 1px solid #c6c8ca;
  background-color: #fff;
}

.refs { height: 86px; }
.places { height: 73px; }

table {
  width: 100%;
  border-spacing: 0;
  table-layout: fixed;
}

.c39 { width: 39px; }
.c65 { width: 65px; }
.c71 { width: 71px; }

th,
td {
  height: 12px;
  padding: 0 0 0 4px;
  text-align: left;
  white-space: nowrap;
}

th {
  height: 15px;
  border-right: 1px solid #dcdedf;
  border-bottom: 1px solid #e6e6e6;
  background-color: #f9f9f9;
  color: #333;
  font-weight: 500;
}

th:last-child {
  padding-left: 3px;
  border-right: 0;
}

.row-buttons {
  display: flex;
  gap: 3px;
  margin-top: 2px;
}

.btn {
  height: 16px;
  width: 28px;
  border: 1px solid #c3c5c7;
  background-color: #fafafa;
}

.row-buttons .btn {
  width: 37px;
}

.btn:disabled {
  border-color: #d6d8da;
  background-color: #e8eaeb;
}

.btn.ok {
  border-color: #bfe2f2;
  background-color: #dfeff7;
  color: #a9b9c2;
}

.dialog footer {
  display: flex;
  justify-content: flex-end;
  gap: 4px;
  padding: 6px;
  border-top: 1px solid #d6d8da;
}
```
